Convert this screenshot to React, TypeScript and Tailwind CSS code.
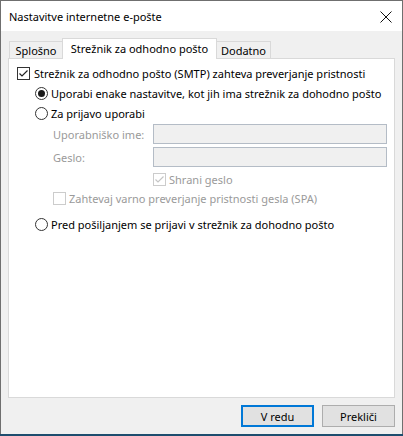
import React from 'react';

const font = { fontFamily: '"Noto Sans", "Liberation Sans", Arial, sans-serif' };

const Check = ({ checked, disabled }: { checked?: boolean; disabled?: boolean }) => (
  <span
    className={`flex h-[13px] w-[13px] shrink-0 items-center justify-center border bg-white ${
      disabled ? 'border-[#cccccc]' : 'border-[#333333]'
    }`}
  >
    {checked && (
      <svg width="11" height="11" viewBox="0 0 11 11">
        <path
          d="M1.5 5.5 L4 8 L9.5 2.5"
          fill="none"
          stroke={disabled ? '#c4c4c4' : '#222222'}
          strokeWidth="1.2"
        />
      </svg>
    )}
  </span>
);

const Radio = ({ selected }: { selected?: boolean }) => (
  <span className="flex h-[13px] w-[13px] shrink-0 items-center justify-center rounded-full border border-[#333333] bg-white">
    {selected && <span className="h-[7px] w-[7px] rounded-full bg-[#1a1a1a]" />}
  </span>
);

const Field = ({ label }: { label: string }) => (
  <div className="flex h-[20px] items-center pl-[44px]">
    <span className="w-[100px] text-[#9a9a9a]">{label}</span>
    <div className="h-[20px] w-[234px] border border-[#b4bcc6] bg-[#f0f0f0]" />
  </div>
);

export default function App() {
  return (
    <div className="flex h-[436px] w-[403px] flex-col text-[11px] leading-none text-black" style={font}>
      <div className="flex h-[434px] flex-col border-x border-t border-[#6f6f6f]">
        {/* title bar */}
        <div className="flex h-[30px] items-center justify-between bg-white pl-[8px] pr-[10px]">
          <span className="pt-[1px] text-[11px]">Nastavitve internetne e-pošte</span>
          <svg width="12" height="12" viewBox="0 0 12 12" className="mt-[1px]">
            <path d="M0.5 0.5 L11.5 11.5 M11.5 0.5 L0.5 11.5" stroke="#111111" strokeWidth="1" />
          </svg>
        </div>

        {/* body */}
        <div className="flex flex-1 flex-col bg-[#f0f0f0] px-[7px] pt-[7px]">
          {/* tabs */}
          <div className="relative z-10 flex h-[20px] items-end pl-[1px]">
            <div className="flex h-[17px] w-[53px] items-center justify-center border-l border-t border-[#d9d9d9] bg-[#f0f0f0] pt-[1px]">
              Splošno
            </div>
            <div className="-mb-px flex h-[21px] w-[155px] items-center justify-center border-x border-t border-[#d9d9d9] bg-white pb-[2px]">
              Strežnik za odhodno pošto
            </div>
            <div className="flex h-[17px] w-[54px] items-center justify-center border-r border-t border-[#d9d9d9] bg-[#f0f0f0] pt-[1px]">
              Dodatno
            </div>
          </div>

          {/* panel */}
          <div className="flex h-[340px] flex-col border border-[#d9d9d9] bg-white pt-[4px]">
            <div className="flex h-[21px] items-center gap-[4px] pl-[8px]">
              <Check checked />
              <span>Strežnik za odhodno pošto (SMTP) zahteva preverjanje pristnosti</span>
            </div>
            <div className="flex h-[19px] items-center gap-[3px] pl-[26px]">
              <Radio selected />
              <span>Uporabi enake nastavitve, kot jih ima strežnik za dohodno pošto</span>
            </div>
            <div className="flex h-[20px] items-center gap-[3px] pl-[26px]">
              <Radio />
              <span>Za prijavo uporabi</span>
            </div>
            <div className="mt-[1px]">
              <Field label="Uporabniško ime:" />
            </div>
            <div className="mt-[3px]">
              <Field label="Geslo:" />
            </div>
            <div className="mt-[6px] flex h-[13px] items-center gap-[3px] pl-[144px]">
              <Check checked disabled />
              <span className="text-[#9a9a9a]">Shrani geslo</span>
            </div>
            <div className="mt-[6px] flex h-[13px] items-center gap-[3px] pl-[44px]">
              <Check disabled />
              <span className="text-[#9a9a9a]">Zahtevaj varno preverjanje pristnosti gesla (SPA)</span>
            </div>
            <div className="mt-[9px] flex h-[20px] items-center gap-[3px] pl-[26px]">
              <Radio />
              <span>Pred pošiljanjem se prijavi v strežnik za dohodno pošto</span>
            </div>
          </div>

          {/* buttons */}
          <div className="mt-[7px] flex justify-end gap-[8px]">
            <button className="flex h-[22px] w-[73px] items-center justify-center border-2 border-[#0078d7] bg-[#e1e1e1]">
              V redu
            </button>
            <button className="flex h-[22px] w-[73px] items-center justify-center border border-[#adadad] bg-[#e1e1e1]">
              Prekliči
            </button>
          </div>
        </div>
      </div>
      <div className="h-[2px] bg-[#1d4d6e]" />
    </div>
  );
}
